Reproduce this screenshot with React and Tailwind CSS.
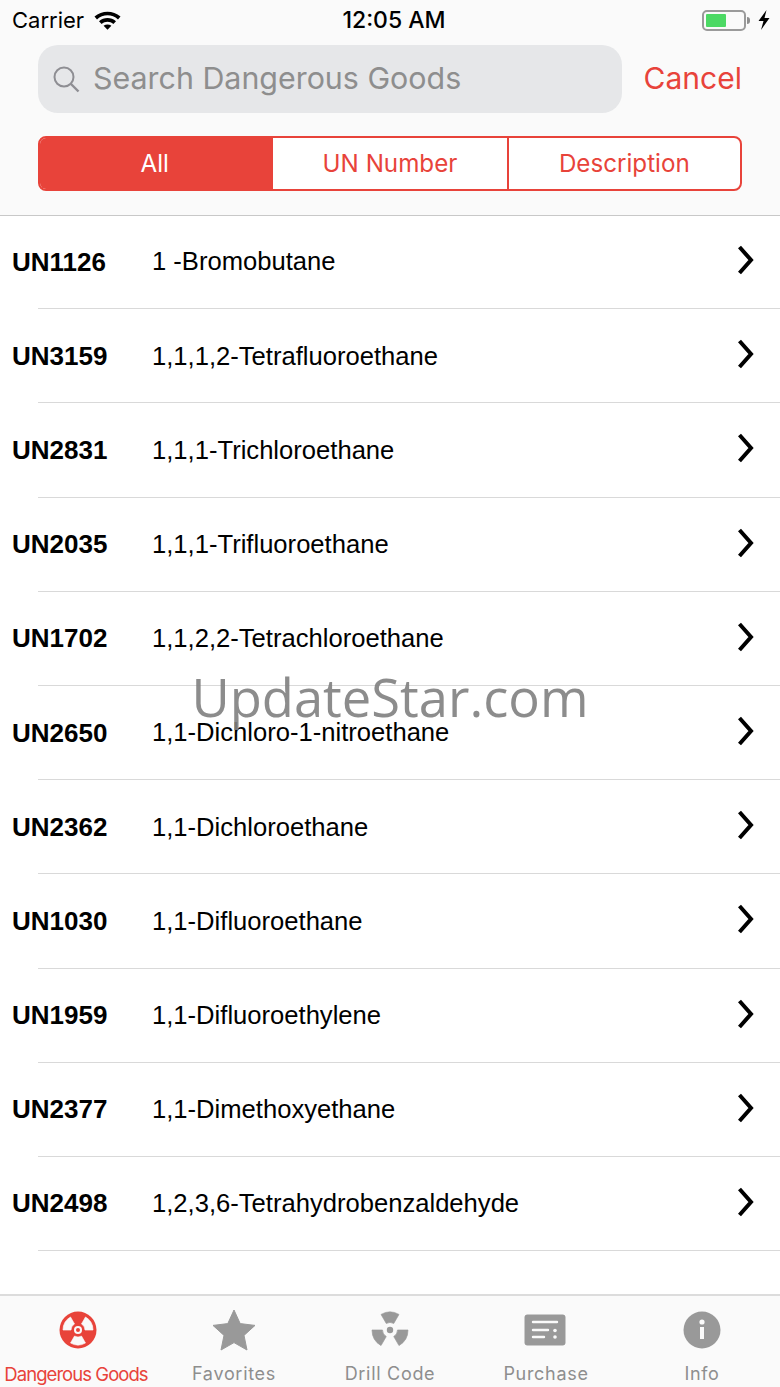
const rows = [
  ["UN1126", "1 -Bromobutane"],
  ["UN3159", "1,1,1,2-Tetrafluoroethane"],
  ["UN2831", "1,1,1-Trichloroethane"],
  ["UN2035", "1,1,1-Trifluoroethane"],
  ["UN1702", "1,1,2,2-Tetrachloroethane"],
  ["UN2650", "1,1-Dichloro-1-nitroethane"],
  ["UN2362", "1,1-Dichloroethane"],
  ["UN1030", "1,1-Difluoroethane"],
  ["UN1959", "1,1-Difluoroethylene"],
  ["UN2377", "1,1-Dimethoxyethane"],
  ["UN2498", "1,2,3,6-Tetrahydrobenzaldehyde"],
];

const Wifi = () => (
  <svg width="27" height="20" viewBox="0 0 27 20">
    <path d="M0.5 6.6C7.8 0 19.2 0 26.5 6.6L24 9.4C18 4 9 4 3 9.4Z" fill="#000" />
    <path d="M5 11.2C9.8 7 17.2 7 22 11.2L19.4 14C15.8 11 11.2 11 7.6 14Z" fill="#000" />
    <path d="M9.6 15.8C12 14.2 15 14.2 17.4 15.8L13.5 19.8Z" fill="#000" />
  </svg>
);

const Battery = () => (
  <div className="flex items-center gap-[1px]">
    <div className="w-[44px] h-[21px] rounded-[5px] border-2 border-[#9a9a9a] p-[2px] bg-[#fafafa]">
      <div className="w-[20px] h-full bg-[#4cd964] rounded-[1px]" />
    </div>
    <div className="w-[3px] h-[7px] bg-[#8e8e8e] rounded-r-sm" />
  </div>
);

const Bolt = () => (
  <svg width="12" height="20" viewBox="0 0 12 20" className="ml-[8px]">
    <path d="M8.5 0L0.5 11H5.5L3 20L11.5 8H6.5Z" fill="#000" />
  </svg>
);

const Chevron = () => (
  <svg width="18" height="30" viewBox="0 0 18 30">
    <path d="M2.5 2L14 15L2.5 28" fill="none" stroke="#000" strokeWidth="4" />
  </svg>
);

// one blade pointing down from the centre, the others are rotated copies
const Blade = ({ angle, inner, outer, fill }) => {
  const dx = 0.5;
  const dy = 0.866;
  return (
    <path
      transform={`rotate(${angle} 19 19)`}
      d={`M${19 + inner * dx} ${19 + inner * dy}L${19 + outer * dx} ${19 + outer * dy}A${outer} ${outer} 0 0 1 ${19 - outer * dx} ${19 + outer * dy}L${19 - inner * dx} ${19 + inner * dy}A${inner} ${inner} 0 0 0 ${19 + inner * dx} ${19 + inner * dy}Z`}
      fill={fill}
      stroke={fill}
      strokeWidth="0.6"
      strokeLinejoin="round"
    />
  );
};

const RadiationActive = () => (
  <svg width="38" height="38" viewBox="0 0 38 38">
    <circle cx="19" cy="19" r="18.5" fill="#e8433a" />
    {[0, 120, 240].map((a) => (
      <Blade key={a} angle={a} inner={7} outer={15} fill="#fafafa" />
    ))}
    <circle cx="19" cy="19" r="4" fill="#fafafa" />
    <circle cx="19" cy="19" r="2" fill="#e8433a" />
  </svg>
);

const RadiationGray = () => (
  <svg width="38" height="38" viewBox="0 0 38 38">
    {[180, 300, 60].map((a) => (
      <Blade key={a} angle={a} inner={7.5} outer={18} fill="#999" />
    ))}
    <circle cx="19" cy="19" r="3.2" fill="#999" />
  </svg>
);

const Star = () => (
  <svg width="44" height="42" viewBox="0 0 44 42">
    <path d="M22 1L28.2 14.6L43 16.4L32 26.4L35 41L22 33.6L9 41L12 26.4L1 16.4L15.8 14.6Z" fill="#999" stroke="#999" strokeLinejoin="round" />
  </svg>
);

const Receipt = () => (
  <svg width="42" height="32" viewBox="0 0 42 32" className="-ml-[2px]">
    <rect x="0.5" y="0.5" width="41" height="31" rx="3" fill="#999" />
    <path d="M9 8H33M9 16H24M9 23H20" stroke="#fafafa" strokeWidth="2.4" strokeLinecap="round" />
    <circle cx="31" cy="16.5" r="1.8" fill="#fafafa" />
    <circle cx="31" cy="23" r="1.8" fill="#fafafa" />
  </svg>
);

const Info = () => (
  <svg width="38" height="38" viewBox="0 0 38 38">
    <circle cx="19" cy="19" r="18.5" fill="#999" />
    <circle cx="19" cy="11" r="2.6" fill="#fafafa" />
    <rect x="17" y="16" width="4" height="12" fill="#fafafa" />
  </svg>
);

const tabs = [
  { label: "Dangerous Goods", icon: <RadiationActive />, active: true },
  { label: "Favorites", icon: <Star /> },
  { label: "Drill Code", icon: <RadiationGray /> },
  { label: "Purchase", icon: <Receipt /> },
  { label: "Info", icon: <Info /> },
];

export default function App() {
  return (
    <div className="relative w-[780px] h-[1387px] overflow-hidden bg-white flex flex-col font-['Inter',sans-serif]">
      <header className="h-[216px] shrink-0 bg-[#fafafa] border-b border-[#c8c8c8]">
        <div className="h-[40px] pl-[12px] pr-[10px] grid grid-cols-[1fr_auto_1fr] items-center">
          <div className="flex items-center gap-[10px] text-[22px] text-black">
            <span>Carrier</span>
            <Wifi />
          </div>
          <span className="ml-[6px] text-[23px] font-medium text-black">12:05 AM</span>
          <div className="flex items-center justify-end">
            <Battery />
            <Bolt />
          </div>
        </div>
        <div className="mt-[5px] px-[38px] flex items-center justify-between">
          <div className="w-[584px] h-[68px] rounded-[20px] bg-[#e6e7e9] flex items-center pl-[14px] gap-[13px]">
            <svg width="28" height="28" viewBox="0 0 28 28">
              <circle cx="12" cy="12" r="9.5" fill="none" stroke="#8e8e93" strokeWidth="2" />
              <path d="M19 19L26.5 26.5" stroke="#8e8e93" strokeWidth="2.4" />
            </svg>
            <span className="text-[30.4px] text-[#8e8e8e]">Search Dangerous Goods</span>
          </div>
          <span className="pb-[2px] text-[30px] text-[#e8433a]">Cancel</span>
        </div>
        <div className="mt-[23px] mx-[38px] w-[704px] h-[55px] grid grid-cols-3 rounded-[8px] border-2 border-[#e8433a] overflow-hidden text-[24.2px] bg-white">
          <div className="pt-[2px] pr-[4px] bg-[#e8433a] text-white flex items-center justify-center">All</div>
          <div className="pt-[2px] text-[#e8433a] flex items-center justify-center">UN Number</div>
          <div className="pt-[2px] text-[#e8433a] flex items-center justify-center border-l-2 border-[#e8433a]">Description</div>
        </div>
      </header>

      <main className="flex-1 -mt-[1px]">
        {rows.map(([code, name]) => (
          <div key={code} className="h-[94.2px] relative flex items-center">
            <span className="w-[152px] pl-[12px] text-[26px] font-bold text-black font-['Liberation_Sans',sans-serif]">{code}</span>
            <span className="pb-[1px] text-[25.6px] text-black font-['Liberation_Sans',sans-serif]">{name}</span>
            <div className="ml-auto mr-[25px] mb-[4px]">
              <Chevron />
            </div>
            <div className="absolute left-[38px] right-0 bottom-0 h-[1px] bg-[#d9d9d9]" />
          </div>
        ))}
      </main>

      <nav className="h-[93px] shrink-0 bg-[#fafafa] border-t-2 border-[#dcdcdc] grid grid-cols-5">
        {tabs.map((t) => (
          <div key={t.label} className="flex flex-col items-center">
            <div className="h-[40px] mt-[14px] flex items-center justify-center">{t.icon}</div>
            <span className={t.active ? "mt-[13px] mr-[4px] leading-[22px] text-[18.5px] tracking-[-0.95px] whitespace-nowrap text-[#e8433a]" : "mt-[13px] leading-[22px] text-[18px] tracking-[0.7px] whitespace-nowrap text-[#8e8e8e]"}>
              {t.label}
            </span>
          </div>
        ))}
      </nav>

      <div className="absolute left-0 right-0 top-[662px] text-center text-[52.5px] leading-[70px] text-[#7f7f7f]/90 font-['Open_Sans',sans-serif]">
        UpdateStar.com
      </div>
    </div>
  );
}
